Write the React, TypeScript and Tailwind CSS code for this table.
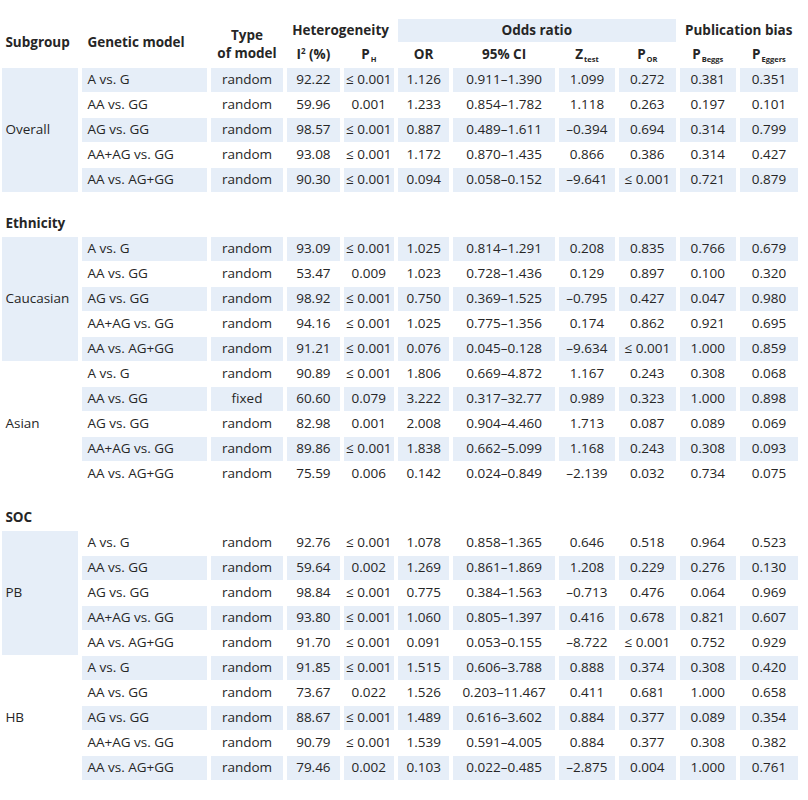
import React from "react";

type Row = [string, string, string, string, string, string, string, string, string, string];

type Sub = {
  name: string;
  shaded: boolean;
  first: number; // index parity of shaded rows
  rows: Row[];
};

type Section = { label?: string; subs: Sub[] };

const sections: Section[] = [
  {
    subs: [
      {
        name: "Overall",
        shaded: true,
        first: 0,
        rows: [
          ["A vs. G", "random", "92.22", "≤ 0.001", "1.126", "0.911–1.390", "1.099", "0.272", "0.381", "0.351"],
          ["AA vs. GG", "random", "59.96", "0.001", "1.233", "0.854–1.782", "1.118", "0.263", "0.197", "0.101"],
          ["AG vs. GG", "random", "98.57", "≤ 0.001", "0.887", "0.489–1.611", "–0.394", "0.694", "0.314", "0.799"],
          ["AA+AG vs. GG", "random", "93.08", "≤ 0.001", "1.172", "0.870–1.435", "0.866", "0.386", "0.314", "0.427"],
          ["AA vs. AG+GG", "random", "90.30", "≤ 0.001", "0.094", "0.058–0.152", "–9.641", "≤ 0.001", "0.721", "0.879"],
        ],
      },
    ],
  },
  {
    label: "Ethnicity",
    subs: [
      {
        name: "Caucasian",
        shaded: true,
        first: 0,
        rows: [
          ["A vs. G", "random", "93.09", "≤ 0.001", "1.025", "0.814–1.291", "0.208", "0.835", "0.766", "0.679"],
          ["AA vs. GG", "random", "53.47", "0.009", "1.023", "0.728–1.436", "0.129", "0.897", "0.100", "0.320"],
          ["AG vs. GG", "random", "98.92", "≤ 0.001", "0.750", "0.369–1.525", "–0.795", "0.427", "0.047", "0.980"],
          ["AA+AG vs. GG", "random", "94.16", "≤ 0.001", "1.025", "0.775–1.356", "0.174", "0.862", "0.921", "0.695"],
          ["AA vs. AG+GG", "random", "91.21", "≤ 0.001", "0.076", "0.045–0.128", "–9.634", "≤ 0.001", "1.000", "0.859"],
        ],
      },
      {
        name: "Asian",
        shaded: false,
        first: 1,
        rows: [
          ["A vs. G", "random", "90.89", "≤ 0.001", "1.806", "0.669–4.872", "1.167", "0.243", "0.308", "0.068"],
          ["AA vs. GG", "fixed", "60.60", "0.079", "3.222", "0.317–32.77", "0.989", "0.323", "1.000", "0.898"],
          ["AG vs. GG", "random", "82.98", "0.001", "2.008", "0.904–4.460", "1.713", "0.087", "0.089", "0.069"],
          ["AA+AG vs. GG", "random", "89.86", "≤ 0.001", "1.838", "0.662–5.099", "1.168", "0.243", "0.308", "0.093"],
          ["AA vs. AG+GG", "random", "75.59", "0.006", "0.142", "0.024–0.849", "–2.139", "0.032", "0.734", "0.075"],
        ],
      },
    ],
  },
  {
    label: "SOC",
    subs: [
      {
        name: "PB",
        shaded: true,
        first: 1,
        rows: [
          ["A vs. G", "random", "92.76", "≤ 0.001", "1.078", "0.858–1.365", "0.646", "0.518", "0.964", "0.523"],
          ["AA vs. GG", "random", "59.64", "0.002", "1.269", "0.861–1.869", "1.208", "0.229", "0.276", "0.130"],
          ["AG vs. GG", "random", "98.84", "≤ 0.001", "0.775", "0.384–1.563", "–0.713", "0.476", "0.064", "0.969"],
          ["AA+AG vs. GG", "random", "93.80", "≤ 0.001", "1.060", "0.805–1.397", "0.416", "0.678", "0.821", "0.607"],
          ["AA vs. AG+GG", "random", "91.70", "≤ 0.001", "0.091", "0.053–0.155", "–8.722", "≤ 0.001", "0.752", "0.929"],
        ],
      },
      {
        name: "HB",
        shaded: false,
        first: 0,
        rows: [
          ["A vs. G", "random", "91.85", "≤ 0.001", "1.515", "0.606–3.788", "0.888", "0.374", "0.308", "0.420"],
          ["AA vs. GG", "random", "73.67", "0.022", "1.526", "0.203–11.467", "0.411", "0.681", "1.000", "0.658"],
          ["AG vs. GG", "random", "88.67", "≤ 0.001", "1.489", "0.616–3.602", "0.884", "0.377", "0.089", "0.354"],
          ["AA+AG vs. GG", "random", "90.79", "≤ 0.001", "1.539", "0.591–4.005", "0.884", "0.377", "0.308", "0.382"],
          ["AA vs. AG+GG", "random", "79.46", "0.002", "0.103", "0.022–0.485", "–2.875", "0.004", "1.000", "0.761"],
        ],
      },
    ],
  },
];

function Sub({ children }: { children: React.ReactNode }) {
  return <sub className="text-[7.5px] font-bold -bottom-[3px] ml-px">{children}</sub>;
}

export default function App() {
  return (
    <div className="min-h-screen bg-white pt-[18px] text-[13.5px] text-[#262626] [font-family:'Open_Sans',sans-serif]">
      <table className="ml-[-1.6px] table-fixed border-separate border-spacing-x-[4.6px] border-spacing-y-px leading-none">
        <colgroup>
          <col className="w-[76px]" />
          <col className="w-[124.4px]" />
          <col className="w-[72.4px]" />
          <col className="w-[52.4px]" />
          <col className="w-[50.4px]" />
          <col className="w-[51.4px]" />
          <col className="w-[101.4px]" />
          <col className="w-[56.4px]" />
          <col className="w-[56.4px]" />
          <col className="w-[56.4px]" />
          <col className="w-[58px]" />
        </colgroup>
        <thead className="font-bold">
          <tr className="h-[23px]">
            <th rowSpan={2} className="pl-[3px] text-left align-middle">
              Subgroup
            </th>
            <th rowSpan={2} className="pl-[5px] text-left align-middle">
              Genetic model
            </th>
            <th rowSpan={2} className="pt-[2px] text-center align-middle leading-[18px]">
              Type
              <br />
              of model
            </th>
            <th colSpan={2} className="text-center">
              Heterogeneity
            </th>
            <th colSpan={4} className="bg-[#e6eef8] text-center">
              Odds ratio
            </th>
            <th colSpan={2} className="text-center">
              Publication bias
            </th>
          </tr>
          <tr className="h-[24px]">
            <th className="text-center">
              I<sup className="text-[8px] -top-[5px]">2</sup> (%)
            </th>
            <th className="text-center">
              P<Sub>H</Sub>
            </th>
            <th className="text-center">OR</th>
            <th className="text-center">95% CI</th>
            <th className="text-center">
              Z<Sub>test</Sub>
            </th>
            <th className="text-center">
              P<Sub>OR</Sub>
            </th>
            <th className="text-center">
              P<Sub>Beggs</Sub>
            </th>
            <th className="text-center">
              P<Sub>Eggers</Sub>
            </th>
          </tr>
        </thead>
        <tbody>
          {sections.map((sec, si) => (
            <React.Fragment key={si}>
              {sec.label && (
                <>
                  <tr className="h-[18px]">
                    <td colSpan={11} />
                  </tr>
                  <tr className="h-[24px]">
                    <td colSpan={11} className="pl-[3px] font-bold">
                      {sec.label}
                    </td>
                  </tr>
                </>
              )}
              {sec.subs.map((sub) =>
                sub.rows.map((r, ri) => {
                  const shade = ri % 2 === sub.first % 2 ? "bg-[#e6eef8]" : "";
                  return (
                    <tr key={sub.name + ri} className="h-[24px]">
                      {ri === 0 && (
                        <td
                          rowSpan={sub.rows.length}
                          className={`pl-[3px] align-middle ${sub.shaded ? "bg-[#e6eef8]" : ""}`}
                        >
                          {sub.name}
                        </td>
                      )}
                      <td className={`pl-[5px] whitespace-nowrap ${shade}`}>{r[0]}</td>
                      {r.slice(1).map((v, ci) => (
                        <td key={ci} className={`text-center whitespace-nowrap ${shade}`}>
                          {v}
                        </td>
                      ))}
                    </tr>
                  );
                })
              )}
            </React.Fragment>
          ))}
        </tbody>
      </table>
    </div>
  );
}
